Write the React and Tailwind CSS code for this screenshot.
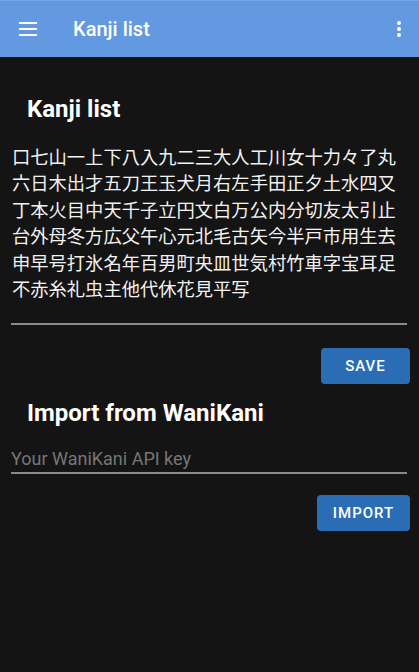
export default function App() {
  const kanji =
    "口七山一上下八入九二三大人工川女十力々了丸六日木出才五刀王玉犬月右左手田正夕土水四又丁本火目中天千子立円文白万公内分切友太引止台外母冬方広父午心元北毛古矢今半戸市用生去申早号打氷名年百男町央皿世気村竹車字宝耳足不赤糸礼虫主他代休花見平写";
  return (
    <div className="w-[419px] h-[672px] bg-[#141414] text-white overflow-hidden" style={{ fontFamily: "Roboto, 'Noto Sans CJK JP', sans-serif" }}>
      <header className="h-[57px] bg-[#6399e0] border-t border-[#72a6e8] flex items-center">
        <div className="w-[56px] flex justify-center">
          <svg width="20" height="14" viewBox="0 0 20 14">
            <rect x="1" y="0" width="18" height="2" fill="white" />
            <rect x="1" y="6" width="18" height="2" fill="white" />
            <rect x="1" y="12" width="18" height="2" fill="white" />
          </svg>
        </div>
        <div className="ml-[17px] text-[20px] font-medium leading-none">Kanji list</div>
        <div className="ml-auto mr-[17px]">
          <svg width="6" height="18" viewBox="0 0 6 18">
            <circle cx="3" cy="3" r="2" fill="white" />
            <circle cx="3" cy="9" r="2" fill="white" />
            <circle cx="3" cy="15" r="2" fill="white" />
          </svg>
        </div>
      </header>
      <main className="pl-[11px] pr-[12px]">
        <h2 className="mt-[36px] ml-[16px] text-[24px] leading-[32px] font-bold">Kanji list</h2>
        <div className="mt-[18px] pb-[22px] border-b-2 border-[#8a8a8a]">
          <p
            className="pl-[1px] text-[18.3px] leading-[26.4px] text-[#f2f2f2] break-all"
            style={{ fontFamily: "'Noto Sans CJK JP', sans-serif" }}
          >
            {kanji}
          </p>
        </div>
        <div className="flex justify-end mt-[23px] -mr-[3px]">
          <button className="w-[89px] h-[36px] rounded-[4px] bg-[#2a6db5] text-[15px] font-medium tracking-[1px] text-white">
            SAVE
          </button>
        </div>
        <h2 className="mt-[13px] ml-[16px] text-[24px] leading-[32px] font-bold">Import from WaniKani</h2>
        <div className="mt-[17px] border-b-2 border-[#8a8a8a]">
          <div className="text-[18px] leading-[26px] text-[#767676]">Your WaniKani API key</div>
        </div>
        <div className="flex justify-end mt-[21px] -mr-[3px]">
          <button className="w-[93px] h-[36px] rounded-[4px] bg-[#2a6db5] text-[15px] font-medium tracking-[1px] text-white">
            IMPORT
          </button>
        </div>
      </main>
    </div>
  );
}
